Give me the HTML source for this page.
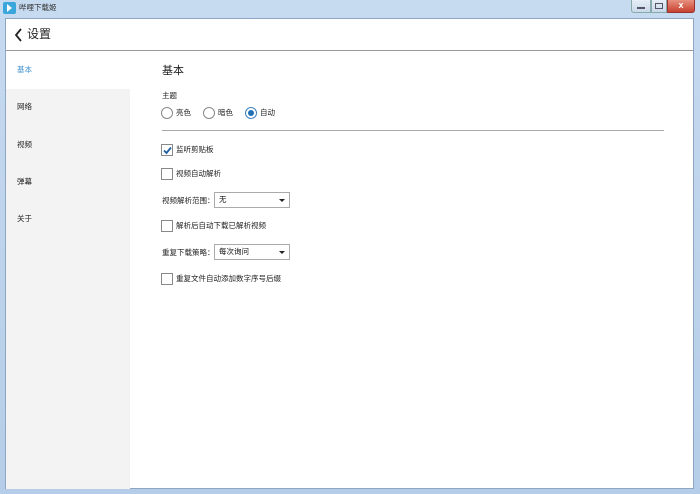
<!DOCTYPE html><html><head><meta charset="utf-8"><style>
*{margin:0;padding:0;box-sizing:border-box}
body{width:700px;height:494px;overflow:hidden;background:linear-gradient(#c6daf0,#b5cde8);font-family:"Liberation Sans","Noto Sans CJK SC",sans-serif;position:relative}
.t{position:absolute;font-size:7.5px;color:#222;line-height:10px;white-space:nowrap}
#c{position:absolute;left:5px;top:18px;width:689px;height:471px;background:#fff;border:1px solid #8fa6c2}
.rad{position:absolute;width:12px;height:12px;border:1px solid #888;border-radius:50%;background:#fff}
.chk{position:absolute;width:12px;height:12px;border:1px solid #888;background:#fff}
.sel{position:absolute;width:76px;height:16px;border:1px solid #aaa;background:#fff;font-size:7.5px;line-height:12px;padding:1px 4px;color:#111}
.sel:after{content:"";position:absolute;right:4px;top:6px;border:3px solid transparent;border-top:3px solid #222}
</style></head><body>
<div style="position:absolute;left:3px;top:2px;width:13px;height:12px;background:#3aa6dc;border-radius:2px"></div>
<div style="position:absolute;left:7px;top:4px;border:4px solid transparent;border-left:5px solid #fff"></div>
<div class="t" style="left:19px;top:3px;color:#333">哔哩下载姬</div>
<div style="position:absolute;left:631px;top:0;width:20px;height:13px;border:1px solid #8aa;border-top:0;border-radius:0 0 0 3px;background:linear-gradient(#e6eef7,#c9d8ea)"></div>
<div style="position:absolute;left:637px;top:7px;width:8px;height:2px;background:#556"></div>
<div style="position:absolute;left:651px;top:0;width:16px;height:13px;border:1px solid #8aa;border-top:0;background:linear-gradient(#e6eef7,#c9d8ea)"></div>
<div style="position:absolute;left:655px;top:3px;width:8px;height:6px;border:1px solid #556"></div>
<div style="position:absolute;left:667px;top:0;width:28px;height:13px;border:1px solid #933;border-top:0;border-radius:0 0 3px 0;background:linear-gradient(#e8907f,#c8402e);color:#fff;font-size:9px;text-align:center;line-height:11px;font-weight:bold">x</div>
<div id="c">
<div style="position:absolute;left:0;top:0;width:687px;height:32px;border-bottom:1px solid #999"></div>
<div style="position:absolute;left:0;top:70px;width:124px;height:400px;background:#f3f3f3"></div>
</div>
<svg style="position:absolute;left:14px;top:28px" width="10" height="14"><path d="M7 1 L2 7 L7 13" stroke="#222" stroke-width="1.8" fill="none"/></svg>
<div class="t" style="left:27px;top:27px;font-size:12px;line-height:14px">设置</div>
<div class="t" style="left:17px;top:65px;color:#3a8fd0">基本</div>
<div class="t" style="left:17px;top:102px">网络</div>
<div class="t" style="left:17px;top:140px">视频</div>
<div class="t" style="left:17px;top:177px">弹幕</div>
<div class="t" style="left:17px;top:214px">关于</div>
<div class="t" style="left:162px;top:65px;font-size:11px;line-height:13px">基本</div>
<div class="t" style="left:162px;top:91px">主题</div>
<div class="rad" style="left:161px;top:107px"></div><div class="t" style="left:176px;top:108px">亮色</div>
<div class="rad" style="left:203px;top:107px"></div><div class="t" style="left:218px;top:108px">暗色</div>
<div class="rad" style="left:245px;top:107px;border-color:#3a80c0"></div><div style="position:absolute;left:248px;top:110px;width:6px;height:6px;border-radius:50%;background:#1f6fb5"></div><div class="t" style="left:260px;top:108px">自动</div>
<div style="position:absolute;left:162px;top:130px;width:502px;height:1px;background:#aaa"></div>
<div class="chk" style="left:161px;top:144px"></div><svg style="position:absolute;left:162px;top:145px" width="11" height="11"><path d="M2 5.5 L4.5 8 L9 2.5" stroke="#1f5f9f" stroke-width="1.8" fill="none"/></svg><div class="t" style="left:176px;top:145px">监听剪贴板</div>
<div class="chk" style="left:161px;top:168px"></div><div class="t" style="left:176px;top:169px">视频自动解析</div>
<div class="t" style="left:162px;top:196px">视频解析范围：</div><div class="sel" style="left:214px;top:192px">无</div>
<div class="chk" style="left:161px;top:220px"></div><div class="t" style="left:176px;top:221px">解析后自动下载已解析视频</div>
<div class="t" style="left:162px;top:248px">重复下载策略：</div><div class="sel" style="left:214px;top:244px">每次询问</div>
<div class="chk" style="left:161px;top:273px"></div><div class="t" style="left:176px;top:274px">重复文件自动添加数字序号后缀</div>
</body></html>
